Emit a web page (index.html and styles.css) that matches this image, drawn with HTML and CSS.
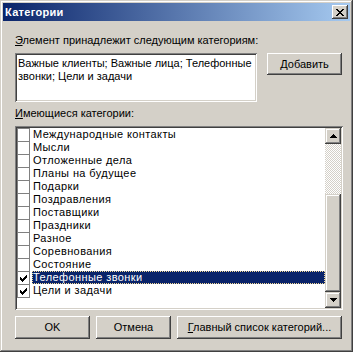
FILE: index.html
```html
<!DOCTYPE html>
<html lang="ru">
<head>
  <meta charset="UTF-8" />
  <title>Категории</title>
  <link rel="stylesheet" href="styles.css">
</head>
<body>

  <div class="window">
    <div class="titlebar">
      <span class="title">Категории</span>
      <button class="close-btn">
        <svg width="8" height="7" viewBox="0 0 8 7" shape-rendering="crispEdges">
          <path d="M0 0h2v1h-2zM6 0h2v1h-2zM1 1h2v1h-2zM5 1h2v1h-2zM2 2h4v1h-4zM3 3h2v1h-2zM2 4h4v1h-4zM1 5h2v1h-2zM5 5h2v1h-2zM0 6h2v1h-2zM6 6h2v1h-2z" fill="#000"/>
        </svg>
      </button>
    </div>

    <div class="dialog">
      <div class="caption"><u>Э</u>лемент принадлежит следующим категориям:</div>

      <div class="assigned-row">
        <div class="field assigned">Важные клиенты; Важные лица; Телефонные<br>звонки; Цели и задачи</div>
        <button class="btn add-btn"><u>Д</u>обавить</button>
      </div>

      <div class="caption"><u>И</u>меющиеся категории:</div>

      <div class="field list-box">
        <ul class="cat-list">
          <li><span class="check"></span><span class="name">Международные контакты</span></li>
          <li><span class="check"></span><span class="name">Мысли</span></li>
          <li><span class="check"></span><span class="name">Отложенные дела</span></li>
          <li><span class="check"></span><span class="name">Планы на будущее</span></li>
          <li><span class="check"></span><span class="name">Подарки</span></li>
          <li><span class="check"></span><span class="name">Поздравления</span></li>
          <li><span class="check"></span><span class="name">Поставщики</span></li>
          <li><span class="check"></span><span class="name">Праздники</span></li>
          <li><span class="check"></span><span class="name">Разное</span></li>
          <li><span class="check"></span><span class="name">Соревнования</span></li>
          <li><span class="check"></span><span class="name">Состояние</span></li>
          <li class="selected"><span class="check checked"><svg width="7" height="7" viewBox="0 0 7 7" shape-rendering="crispEdges"><path d="M6 0h1v1h-1zM5 1h2v1h-2zM0 2h1v1h-1zM4 2h3v1h-3zM0 3h2v1h-2zM3 3h3v1h-3zM0 4h5v1h-5zM1 5h3v1h-3zM2 6h1v1h-1z" fill="#000"/></svg></span><span class="name">Телефонные звонки</span></li>
          <li><span class="check checked"><svg width="7" height="7" viewBox="0 0 7 7" shape-rendering="crispEdges"><path d="M6 0h1v1h-1zM5 1h2v1h-2zM0 2h1v1h-1zM4 2h3v1h-3zM0 3h2v1h-2zM3 3h3v1h-3zM0 4h5v1h-5zM1 5h3v1h-3zM2 6h1v1h-1z" fill="#000"/></svg></span><span class="name">Цели и задачи</span></li>
        </ul>
        <div class="scrollbar">
          <div class="scroll-btn">
            <svg width="7" height="4" viewBox="0 0 7 4" shape-rendering="crispEdges"><path d="M3 0h1v1h-1zM2 1h3v1h-3zM1 2h5v1h-5zM0 3h7v1h-7z" fill="#000"/></svg>
          </div>
          <div class="scroll-track"></div>
          <div class="scroll-thumb"></div>
          <div class="scroll-btn">
            <svg width="7" height="4" viewBox="0 0 7 4" shape-rendering="crispEdges"><path d="M0 0h7v1h-7zM1 1h5v1h-5zM2 2h3v1h-3zM3 3h1v1h-1z" fill="#000"/></svg>
          </div>
        </div>
      </div>

      <div class="actions">
        <button class="btn ok-btn">OK</button>
        <button class="btn cancel-btn">Отмена</button>
        <button class="btn master-btn"><u>Г</u>лавный список категорий...</button>
      </div>
    </div>
  </div>

</body>
</html>
```

FILE: styles.css
```css
body {
  margin: 0;
  font-family: 'Liberation Sans', Arial, sans-serif;
  font-size: 11px;
  line-height: 13px;
  color: #000;
  background: #d4d0c8;
}

.window {
  width: 353px;
  height: 352px;
  box-sizing: border-box;
  padding: 3px;
  background: #d4d0c8;
  box-shadow: inset -1px -1px #404040, inset 1px 1px #d4d0c8, inset -2px -2px #808080, inset 2px 2px #fff;
}

.titlebar {
  height: 18px;
  display: flex;
  align-items: center;
  justify-content: space-between;
  padding: 0 2px 0 2px;
  background: linear-gradient(to right, #0a246a, #a6caf0);
}

.title {
  color: #fff;
  font-weight: bold;
  letter-spacing: 0.3px;
}

.close-btn {
  width: 16px;
  height: 14px;
  padding: 0;
  border: none;
  display: flex;
  align-items: center;
  justify-content: center;
  background: #d4d0c8;
  box-shadow: inset -1px -1px #404040, inset 1px 1px #fff, inset -2px -2px #808080, inset 2px 2px #d4d0c8;
}

.dialog {
  padding: 13px 8px 0 12px;
}

.caption {
  height: 13px;
  white-space: nowrap;
}

.field {
  background: #fff;
  box-sizing: border-box;
  box-shadow: inset 1px 1px #808080, inset -1px -1px #fff, inset 2px 2px #404040, inset -2px -2px #d4d0c8;
}

.assigned-row {
  display: flex;
  align-items: flex-start;
  margin-top: 6px;
  margin-bottom: 5px;
}

.assigned {
  width: 242px;
  height: 49px;
  padding: 4px 3px;
  white-space: nowrap;
  overflow: hidden;
}

.btn {
  font-family: inherit;
  font-size: 11px;
  line-height: 13px;
  color: #000;
  background: #d4d0c8;
  border: none;
  padding: 0;
  height: 23px;
  box-shadow: inset -1px -1px #404040, inset 1px 1px #fff, inset -2px -2px #808080, inset 2px 2px #d4d0c8;
}

.add-btn {
  width: 75px;
  height: 22px;
  margin-left: 10px;
}

.list-box {
  margin-top: 6px;
  width: 328px;
  height: 184px;
  padding: 2px;
  display: flex;
}

.cat-list {
  list-style: none;
  margin: 0;
  padding: 0;
  flex: 1;
}

.cat-list li {
  height: 13px;
  display: flex;
  align-items: flex-start;
}

.check {
  width: 13px;
  height: 14px;
  box-sizing: border-box;
  border: 1px solid #808080;
  display: flex;
  align-items: center;
  justify-content: center;
  background: #fff;
  flex-shrink: 0;
}

.name {
  margin-left: 2px;
  padding-left: 1px;
  height: 13px;
  letter-spacing: 0.4px;
}

.selected .name {
  flex: 1;
  background: #0a246a;
  color: #fff;
  outline: 1px dotted #f5db95;
  outline-offset: -1px;
}

.scrollbar {
  width: 16px;
  display: flex;
  flex-direction: column;
}

.scroll-btn,
.scroll-thumb {
  background: #d4d0c8;
  box-shadow: inset -1px -1px #404040, inset 1px 1px #d4d0c8, inset -2px -2px #808080, inset 2px 2px #fff;
}

.scroll-btn {
  height: 16px;
  display: flex;
  align-items: center;
  justify-content: center;
}

.scroll-track {
  height: 50px;
  background: repeating-conic-gradient(#d4d0c8 0 25%, #fff 0 50%) 0 0 / 2px 2px;
}

.scroll-thumb {
  flex: 1;
}

.actions {
  display: flex;
  margin-top: 6px;
}

.ok-btn,
.cancel-btn {
  width: 75px;
  margin-right: 6px;
}

.master-btn {
  width: 165px;
}
```
